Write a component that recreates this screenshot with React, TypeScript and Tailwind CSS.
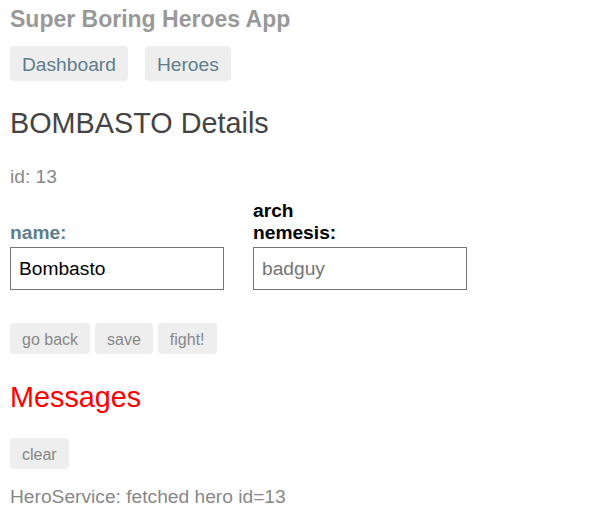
import React from 'react';

const navBtn =
    'h-[35px] px-[12px] pt-[8px] leading-[22px] text-[19.2px] text-[#607d8b] bg-[#eee] rounded-[4px]';
const actionBtn =
    'h-[31px] px-[12px] pt-[8px] pb-[5px] leading-[18px] text-[16px] text-[#888] bg-[#eee] rounded-[4px]';
const field =
    'block w-[214px] h-[43px] mt-[3px] border border-[#767676] px-[8px] text-[19.2px] text-black placeholder:text-[#757575] outline-none';

export default function App() {
    return (
        <div className="px-[10px] font-['Liberation_Sans',Arial,sans-serif] bg-white min-h-[511px]">
            <h1 className="pt-[6px] text-[23px] leading-[26px] font-bold text-[#999]">
                Super Boring Heroes App
            </h1>

            <nav className="mt-[14px] flex gap-[17px]">
                <a className={navBtn}>Dashboard</a>
                <a className={navBtn}>Heroes</a>
            </nav>

            <h2 className="mt-[26px] text-[28.8px] leading-[33px] text-[#444]">BOMBASTO Details</h2>

            <div className="mt-[26px] text-[19.2px] leading-[22px] text-[#888]">id: 13</div>

            <div className="mt-[12px] flex items-end gap-[29px]">
                <div>
                    <label className="block text-[19.2px] leading-[22px] font-bold text-[#607d8b]">name:</label>
                    <input className={field} defaultValue="Bombasto" />
                </div>
                <div>
                    <label className="block w-[100px] text-[19.2px] leading-[22px] font-bold text-black">
                        arch nemesis:
                    </label>
                    <input className={field} placeholder="badguy" />
                </div>
            </div>

            <div className="mt-[33px] flex gap-[5px]">
                <button className={actionBtn}>go back</button>
                <button className={actionBtn}>save</button>
                <button className={actionBtn}>fight!</button>
            </div>

            <h2 className="mt-[27px] text-[28.8px] leading-[33px] text-[#f00]">Messages</h2>

            <div className="mt-[24px]">
                <button className={actionBtn}>clear</button>
            </div>

            <div className="mt-[17px] text-[19.2px] leading-[22px] text-[#888]">
                HeroService: fetched hero id=13
            </div>
        </div>
    );
}
